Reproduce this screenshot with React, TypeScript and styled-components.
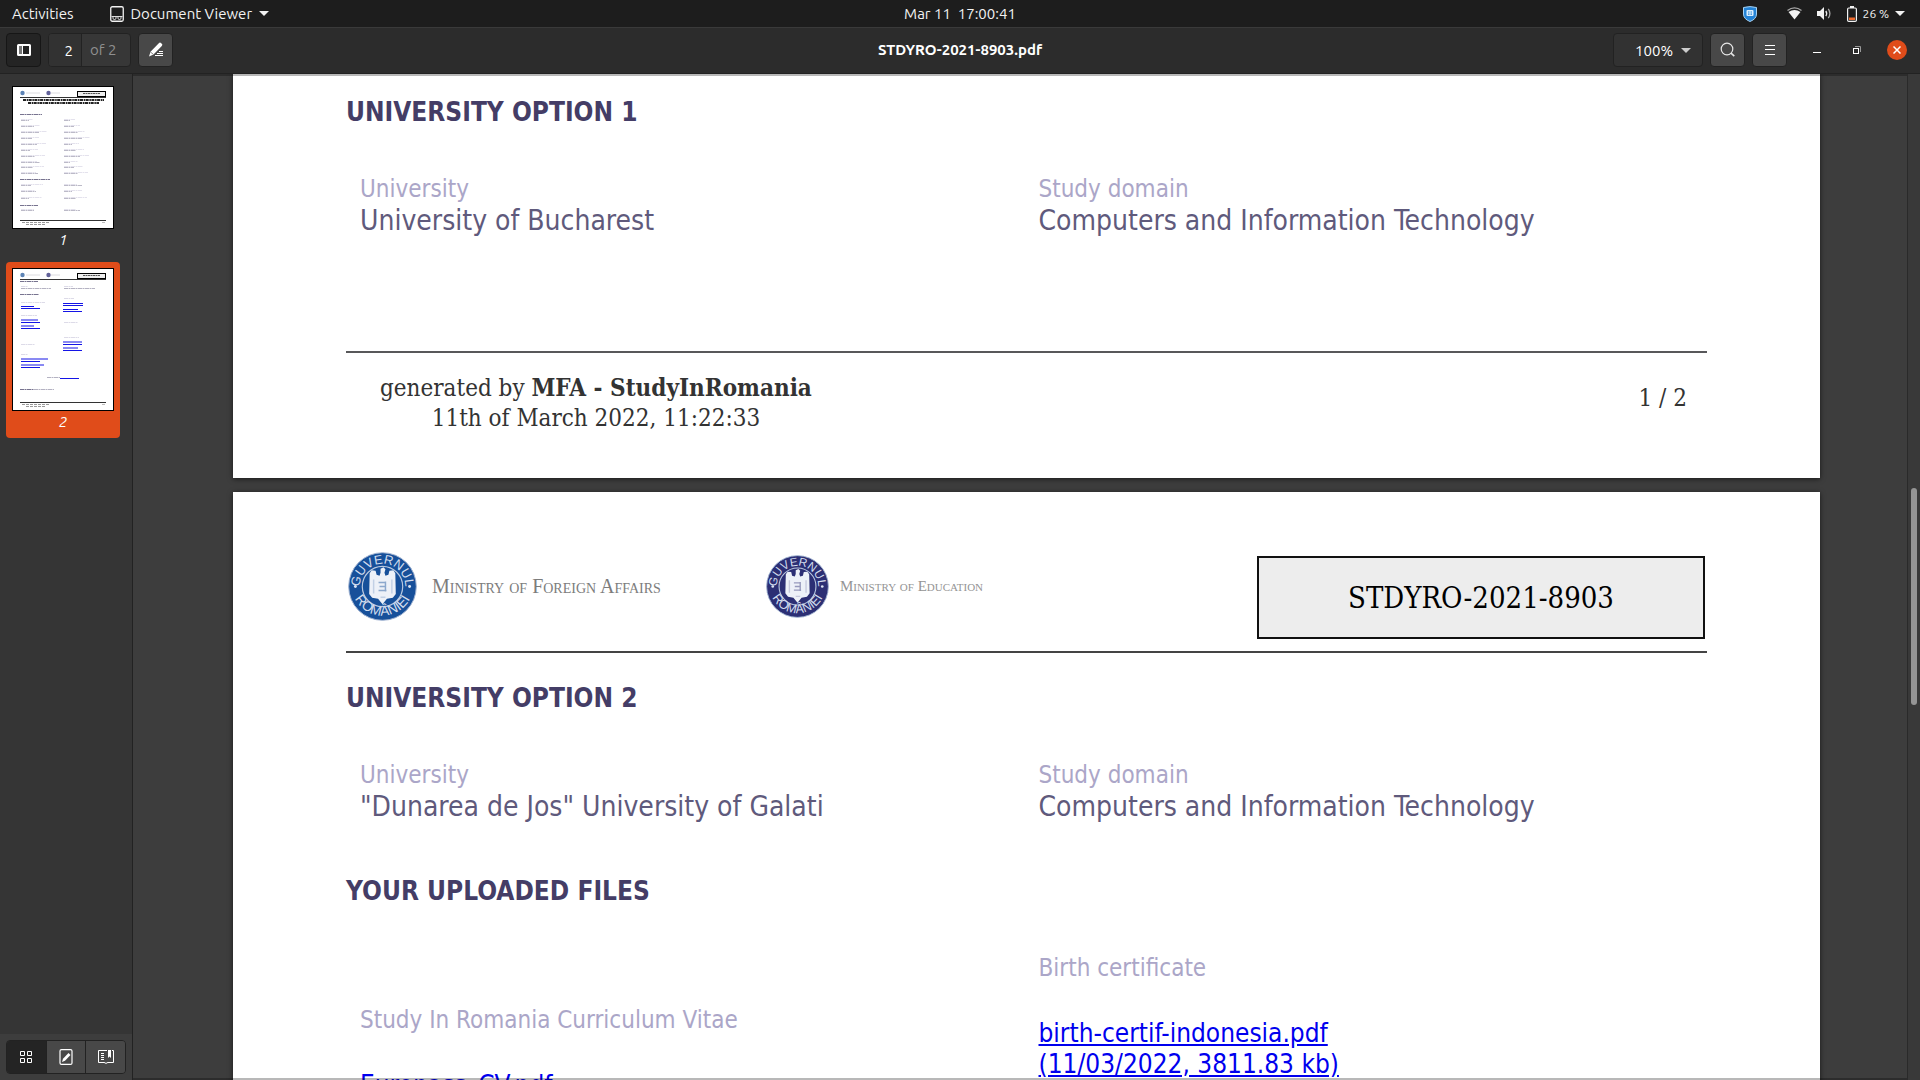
import React from "react";
import styled, { createGlobalStyle, css } from "styled-components";

const uiFont = `Ubuntu, "Noto Sans", "Open Sans", sans-serif`;
const docFont = `"DejaVu Sans Condensed", "DejaVu Sans", sans-serif`;
const serifFont = `"DejaVu Serif Condensed", "DejaVu Serif", serif`;

const GlobalStyle = createGlobalStyle`
  *, *::before, *::after { box-sizing: border-box; }
  body { margin: 0; background: #3d3d3d; }
  h1, h2, p, dl, dt, dd { margin: 0; }
  button, input, select { font: inherit; color: inherit; margin: 0; }
  svg { display: block; }
`;

const Shell = styled.div`
  display: flex;
  flex-direction: column;
  height: 100vh;
  overflow: hidden;
  font-family: ${uiFont};
  font-size: 15px;
  color: #fff;
`;

const bareButton = css`
  border: 0;
  padding: 0;
  background: none;
  display: flex;
  align-items: center;
`;

const TopBar = styled.header`
  display: grid;
  grid-template-columns: 1fr auto 1fr;
  align-items: center;
  height: 27px;
  flex: none;
  padding: 0 12px;
  background: #1d1d1d;
  color: #f2f2f2;
`;

const TopGroup = styled.div<{ $end?: boolean }>`
  display: flex;
  align-items: center;
  justify-content: ${(p) => (p.$end ? "flex-end" : "flex-start")};
  gap: ${(p) => (p.$end ? "15px" : "36px")};
  padding-right: ${(p) => (p.$end ? "3px" : "0")};
`;

const TopButton = styled.button<{ $small?: boolean }>`
  ${bareButton}
  gap: ${(p) => (p.$small ? "6px" : "7px")};
  font-size: ${(p) => (p.$small ? "12px" : "15px")};
  line-height: 20px;
`;

const Clock = styled.time`
  white-space: pre;
  line-height: 20px;
`;

const HeaderBar = styled.div`
  display: grid;
  grid-template-columns: 1fr auto 1fr;
  align-items: center;
  height: 47px;
  flex: none;
  padding: 0 6px;
  background: #2c2c2c;
  box-shadow: inset 0 1px 0 #3a3a3a;
  border-bottom: 1px solid #222;
`;

const Tools = styled.div<{ $end?: boolean }>`
  display: flex;
  align-items: center;
  justify-content: ${(p) => (p.$end ? "flex-end" : "flex-start")};
  gap: 7px;
  padding-right: ${(p) => (p.$end ? "7px" : "0")};
`;

const DocTitle = styled.h1`
  font-size: 15px;
  font-weight: 700;
  line-height: 20px;
`;

const ToolButton = styled.button<{ $pressed?: boolean }>`
  display: flex;
  align-items: center;
  justify-content: center;
  width: 35px;
  height: 34px;
  padding: 0;
  border-radius: 4px;
  border: 1px solid ${(p) => (p.$pressed ? "#161616" : "#222")};
  background: ${(p) => (p.$pressed ? "#242424" : "#484848")};
`;

const PageField = styled.label`
  display: flex;
  align-items: center;
  height: 34px;
  border: 1px solid #222;
  border-radius: 4px;
  background: #373737;
  overflow: hidden;
  color: #8f8f8f;
  line-height: 20px;
`;

const PageInput = styled.input`
  width: 33px;
  height: 32px;
  padding: 0 8px 0 0;
  border: 0;
  border-right: 1px solid #222;
  background: #323232;
  color: #fff;
  text-align: right;
`;

const PageTotal = styled.span`
  width: 48px;
  padding-left: 8px;
`;

const ZoomField = styled.div`
  display: flex;
  align-items: center;
  width: 90px;
  height: 34px;
  padding: 0 11px 0 21px;
  border: 1px solid #222;
  border-radius: 4px;
  background: #323232;
`;

const ZoomSelect = styled.select`
  appearance: none;
  flex: 1;
  min-width: 0;
  padding: 0;
  border: 0;
  background: none;
  color: #fff;
`;

const WindowButtons = styled.div`
  display: flex;
  align-items: center;
  gap: 20px;
  padding-left: 13px;
`;

const WindowButton = styled.button<{ $close?: boolean }>`
  ${bareButton}
  justify-content: center;
  width: 20px;
  height: 20px;
  border-radius: 50%;
  background: ${(p) => (p.$close ? "#e04c1a" : "transparent")};
`;

const Workspace = styled.div`
  display: flex;
  flex: 1;
  min-height: 0;
`;

const Sidebar = styled.aside`
  display: flex;
  flex-direction: column;
  width: 133px;
  flex: none;
  background: #353535;
  border-right: 1px solid #222;
`;

const Thumbs = styled.nav`
  display: flex;
  flex-direction: column;
  gap: 6px;
  flex: 1;
  padding: 6px;
`;

const ThumbButton = styled.button<{ $active?: boolean }>`
  display: flex;
  flex-direction: column;
  align-items: center;
  width: 114px;
  height: 176px;
  padding: 6px 0 0;
  border: 0;
  border-radius: 4px;
  font-style: italic;
  line-height: 22px;
  background: ${(p) => (p.$active ? "#e04c1a" : "transparent")};
`;

const SideFooter = styled.div`
  display: flex;
  height: 46px;
  padding: 6px;
  background: #3d3d3d;
`;

const ModeGroup = styled.div`
  display: flex;
  flex: 1;
  height: 34px;
  border: 1px solid #222;
  border-radius: 4px;
  overflow: hidden;
`;

const ModeButton = styled.button<{ $pressed?: boolean }>`
  ${bareButton}
  flex: 1;
  justify-content: center;
  background: ${(p) => (p.$pressed ? "#242424" : "#484848")};
  & + & { border-left: 1px solid #222; }
`;

const Viewport = styled.main`
  position: relative;
  display: flex;
  flex-direction: column;
  gap: 14px;
  flex: 1;
  min-width: 0;
  padding: 0 100px;
  overflow: hidden;
  background: #3d3d3d;
`;

const EdgeShade = styled.div<{ $bottom?: boolean }>`
  position: absolute;
  left: 0;
  right: 0;
  ${(p) => (p.$bottom ? "bottom: 0;" : "top: 0;")}
  height: 2px;
  background: rgba(0, 0, 0, 0.28);
`;

const ScrollTrack = styled.div`
  position: absolute;
  top: 0;
  bottom: 0;
  right: 0;
  width: 13px;
  padding: 414px 3px 0;
  background: #393939;
  border-left: 1px solid #2a2a2a;
`;

const ScrollThumb = styled.div`
  width: 6px;
  height: 217px;
  border-radius: 3px;
  background: #959595;
`;

const Sheet = styled.article<{ $grow?: boolean }>`
  flex: ${(p) => (p.$grow ? "1 0 auto" : "none")};
  padding: ${(p) => (p.$grow ? "60px 113px 0" : "22px 113px 45px")};
  background: #fff;
  box-shadow: 0 1px 5px rgba(0, 0, 0, 0.6);
  font-family: ${docFont};
`;

const SectionTitle = styled.h2`
  font-size: 26px;
  font-weight: 700;
  line-height: 32px;
  color: #443d66;
`;

const Fields = styled.dl<{ $space: number }>`
  display: grid;
  grid-template-columns: 1fr 1fr;
  gap: 10px;
  padding: 45px 0 ${(p) => p.$space}px 14px;
`;

const FieldCell = styled.div<{ $lowered?: boolean }>`
  padding-top: ${(p) => (p.$lowered ? "52px" : "0")};
`;

const FieldLabel = styled.dt`
  font-size: 24px;
  line-height: 32px;
  color: #aba6c8;
`;

const FieldValue = styled.dd<{ $file?: boolean }>`
  padding-top: ${(p) => (p.$file ? "34px" : "0")};
  font-size: ${(p) => (p.$file ? "26px" : "28px")};
  line-height: 31px;
  color: #5f5a7c;
`;

const FileLink = styled.a`
  color: #0000ee;
  text-decoration: underline;
`;

const SheetFooter = styled.footer`
  display: flex;
  align-items: center;
  justify-content: space-between;
  padding: 20px 20px 0 34px;
  border-top: 2px solid #58585a;
  font-family: ${serifFont};
  font-size: 24px;
  line-height: 30px;
  text-align: center;
  color: #333;
`;

const PageNumber = styled.p`
  padding-bottom: 10px;
`;

const SheetHeader = styled.header`
  display: flex;
  align-items: flex-start;
  height: 101px;
  margin-bottom: 29px;
  padding-right: 2px;
  border-bottom: 2px solid #444;
`;

const Brand = styled.div<{ $wide?: boolean }>`
  display: flex;
  align-items: center;
  gap: ${(p) => (p.$wide ? "15px" : "11px")};
  width: ${(p) => (p.$wide ? "420px" : "360px")};
  height: 68px;
  padding-left: ${(p) => (p.$wide ? "2px" : "0")};
  font-family: "Liberation Serif", serif;
  font-variant: small-caps;
  font-size: ${(p) => (p.$wide ? "20px" : "15px")};
  line-height: 20px;
  color: ${(p) => (p.$wide ? "#7c7c7c" : "#949494")};
`;

const CodeBox = styled.p`
  display: flex;
  align-items: center;
  justify-content: center;
  width: 448px;
  height: 83px;
  margin: 4px 0 0 auto;
  border: 2px solid #111;
  background: #ededed;
  font-family: ${serifFont};
  font-size: 29px;
  line-height: 36px;
  color: #000;
`;

const Caret = ({ color = "#f2f2f2" }: { color?: string }) => (
  <svg width="10" height="5" viewBox="0 0 10 5" aria-hidden="true">
    <path d="M0 0h10L5 5z" fill={color} />
  </svg>
);

const ViewerIcon = () => (
  <svg width="14" height="16" viewBox="0 0 14 16" fill="none" stroke="#f2f2f2" aria-hidden="true">
    <rect x="0.75" y="0.75" width="12.5" height="14.5" rx="1.5" strokeWidth="1.3" />
    <path d="M1.5 10.500h11M3 11v1.200q0 1.300 1.500 1.300T6 12.200V11M8 11v1.200q0 1.300 1.500 1.300T11 12.200V11" strokeWidth="0.900" />
  </svg>
);

const ShieldIcon = () => (
  <svg width="14" height="16" viewBox="0 0 14 16" aria-hidden="true">
    <path d="M0.500 1.500Q7-0.300 13.500 1.500V8q0 5-6.500 7.500Q0.500 13 0.500 8z" fill="#2483d6" stroke="#a6d2f3" />
    <rect x="3.500" y="4" width="7" height="6" rx="1" fill="#d9efff" />
    <path d="M5 6h1.500M7.500 6H9M5 8.200h1.500M7.500 8.200H9" stroke="#2483d6" strokeWidth="1.200" />
  </svg>
);

const WifiIcon = () => (
  <svg width="15" height="13" viewBox="0 0 15 13" aria-hidden="true">
    <path d="M0.500 3.500Q7.500-1.800 14.500 3.500" fill="none" stroke="#a8a8a8" strokeWidth="1.400" />
    <path d="M1.500 5Q7.500 0.800 13.500 5L7.500 12.500z" fill="#f2f2f2" />
  </svg>
);

const SoundIcon = () => (
  <svg width="15" height="13" viewBox="0 0 15 13" aria-hidden="true">
    <path d="M0 4h3l4-4v13L3 9H0z" fill="#f2f2f2" />
    <path d="M8.800 4q1.800 2.500 0 5" fill="none" stroke="#f2f2f2" strokeWidth="1.300" />
    <path d="M11.300 1.800q3.200 4.700 0 9.400" fill="none" stroke="#a8a8a8" strokeWidth="1.300" />
  </svg>
);

const BatteryIcon = () => (
  <svg width="10" height="16" viewBox="0 0 10 16" aria-hidden="true">
    <path d="M3 0h4v2H3z" fill="#f2f2f2" />
    <rect x="0.600" y="2" width="8.800" height="13.400" rx="1.200" fill="none" stroke="#f2f2f2" strokeWidth="1.200" />
    <path d="M2 11.500h6V14H2z" fill="#ef6a2c" />
  </svg>
);

const PanelIcon = () => (
  <svg width="14" height="12" viewBox="0 0 14 12" aria-hidden="true">
    <path d="M1 1h4v10H1z" fill="#777" />
    <rect x="1" y="1" width="12" height="10" rx="0.500" fill="none" stroke="#fff" strokeWidth="2" />
    <path d="M5.500 2v8" stroke="#fff" />
  </svg>
);

const AnnotateIcon = () => (
  <svg width="16" height="16" viewBox="0 0 16 16" aria-hidden="true">
    <path d="M10.800 1.200q1.200-1.200 2.400 0l0.600 0.600q1.200 1 0 2.200L5.500 12.500 1 14.500l1.500-4.800z" fill="#fff" />
    <path d="M11 9.500h4M9 11.500h6M7 13.500h8" stroke="#fff" />
    <path d="M2.900 10.200l2.200 2.200" stroke="#484848" strokeWidth="0.800" />
  </svg>
);

const SearchIcon = () => (
  <svg width="16" height="16" viewBox="0 0 16 16" fill="none" stroke="#e6e6e6" strokeWidth="1.200" aria-hidden="true">
    <circle cx="7" cy="7" r="5.800" />
    <path d="M11 11.200l3.300 3" strokeWidth="1.600" />
  </svg>
);

const MenuIcon = () => (
  <svg width="10" height="10" viewBox="0 0 10 10" stroke="#fff" aria-hidden="true">
    <path d="M0 0.500h10M0 4.500h10M0 9.500h10" />
  </svg>
);

const GridIcon = () => (
  <svg width="12" height="12" viewBox="0 0 12 12" fill="none" stroke="#fff" aria-hidden="true">
    <path d="M0.500 0.500h4v4h-4zM7.500 0.500h4v4h-4zM0.500 7.500h4v4h-4zM7.500 7.500h4v4h-4z" />
  </svg>
);

const NoteIcon = () => (
  <svg width="14" height="16" viewBox="0 0 14 16" aria-hidden="true">
    <rect x="1" y="0.600" width="12" height="14.800" rx="1.500" fill="none" stroke="#fff" strokeWidth="1.200" />
    <path d="M9.500 4l2 2-5.500 5.800-3 1.200 1-3.200z" fill="#fff" />
  </svg>
);

const BookmarkIcon = () => (
  <svg width="16" height="14" viewBox="0 0 16 14" fill="none" stroke="#fff" aria-hidden="true">
    <path d="M9 0.500H0.500v12H6q1 0 2 1 1-1 2-1h5.500v-12H14" />
    <path d="M3 3.500h3M3 5.500h3M3 7.500h3M3 9.500h3" />
    <path d="M10 0h3v8l-1.500-1.500L10 8z" fill="#fff" stroke="none" />
  </svg>
);

const Emblem = ({ id, size, color }: { id: string; size: number; color: string }) => (
  <svg width={size} height={size} viewBox="0 0 70 70" aria-hidden="true">
    <defs>
      <path id={`${id}-top`} d="M12 35a23 23 0 0 1 46 0" />
      <path id={`${id}-bottom`} d="M3.500 33a31.500 31.500 0 0 0 63 0" />
    </defs>
    <circle cx="35" cy="35" r="34.300" fill={color} stroke="#9fb2d0" strokeWidth="1" />
    <circle cx="35" cy="35" r="20.500" fill="none" stroke="#b9c8e0" strokeWidth="1.200" />
    <g fill="#d3ddee" fontFamily="Liberation Sans, sans-serif" fontSize="13">
      <text textAnchor="middle">
        <textPath href={`#${id}-top`} startOffset="50%">GUVERNUL</textPath>
      </text>
      <text textAnchor="middle" fontSize="14">
        <textPath href={`#${id}-bottom`} startOffset="50%">ROMÂNIEI</textPath>
      </text>
    </g>
    <circle cx="7.500" cy="35" r="1.500" fill="#dbe4f2" />
    <circle cx="62.500" cy="35" r="1.500" fill="#dbe4f2" />
    <path
      d="M33 17l3-1.500 2 2-1 3.500 1 3 3-1 1-4 4-0.500 2 3 0.500 21-3 4-6 1-4.500 5.500-4.500-5.500-6-1-3-4 0.500-21 2-3 4 0.500 1 4 3 1 1-3z"
      fill="#edf1f8"
    />
    <path d="M31 31h7M32 35h6M31 39h8M38 30v10" fill="none" stroke={color} strokeOpacity="0.450" strokeWidth="1.500" />
    <path d="M26 28v14M44.500 28v14M33 46h5" fill="none" stroke={color} strokeOpacity="0.200" strokeWidth="1.500" />
  </svg>
);

type Stroke = [number, number, number];

const ThumbFrame = ({ children }: { children: React.ReactNode }) => (
  <svg width="102" height="143" viewBox="0 0 102 143" fill="none" aria-hidden="true">
    <rect x="0.500" y="0.500" width="101" height="142" fill="#fff" stroke="#000" />
    <circle cx="10.500" cy="7" r="2.200" fill="#5d83b5" />
    <circle cx="36.500" cy="7" r="2.200" fill="#62629a" />
    <path d="M14 7h14M39 7h9" stroke="#dcdce0" />
    <rect x="65.500" y="5.500" width="28" height="5" fill="#eee" stroke="#000" />
    <path d="M71 7.500h17" stroke="#555" strokeDasharray="2 0.500" />
    <path d="M8 11.500h86M8 134.500h86" stroke="#333" />
    {children}
    <path d="M10 136.500h28M14 138.500h20" stroke="#999" strokeDasharray="3 1" />
    <path d="M90 136.500h3" stroke="#bbb" />
  </svg>
);

const Lines = ({ items, color }: { items: Stroke[]; color: string }) => (
  <path d={items.map(([x, y, w]) => `M${x} ${y}.5h${w}`).join("")} stroke={color} strokeDasharray="4 0.500 2 0.500" />
);

const firstRows = [33, 39, 45, 51, 57, 63, 69, 75, 80, 86, 98, 104, 111, 123];

const FirstThumb = () => (
  <ThumbFrame>
    <path d="M11 14h81M16 17h71" stroke="#222" strokeWidth="2" strokeDasharray="3 0.700 1.500 0.500" />
    <Lines color="#77738f" items={[[8, 28, 22], [8, 93, 30], [8, 119, 18]]} />
    <Lines color="#e4e2ed" items={firstRows.flatMap((y, i): Stroke[] => [[9, y, 12 + ((i * 7) % 15)], [52, y, 11 + ((i * 5) % 16)]])} />
    <Lines color="#bcbac8" items={firstRows.flatMap((y, i): Stroke[] => [[9, y + 1, 8 + ((i * 5) % 12)], [52, y + 1, 6 + ((i * 4) % 14)]])} />
  </ThumbFrame>
);

const SecondThumb = () => (
  <ThumbFrame>
    <Lines color="#77738f" items={[[8, 13, 18], [8, 26, 19], [8, 121, 14]]} />
    <Lines color="#dddbe8" items={[[9, 18, 7], [52, 18, 9], [52, 30, 10], [9, 34, 24], [9, 47, 16], [52, 54, 14], [52, 69, 15], [9, 76, 14], [9, 86, 7]]} />
    <Lines color="#b4b2c2" items={[[9, 20, 30], [52, 20, 31], [35, 109, 13], [22, 121, 20]]} />
    <path
      d="M9 38.500h13M9 40.500h19M51 35.500h20M51 37.500h20M51 41.500h15M51 43.500h19M9 52h17M9 54.500h19M9 58h13M9 60.500h19M51 74h19M51 76.500h19M51 80h15M51 82.500h19M9 91h27M9 93.500h19M9 97h23M9 99.500h19M48 110.500h19"
      stroke="#1414e6"
    />
  </ThumbFrame>
);

const OptionFields = ({ university, domain, space }: { university: string; domain: string; space: number }) => (
  <Fields $space={space}>
    <FieldCell>
      <FieldLabel>University</FieldLabel>
      <FieldValue>{university}</FieldValue>
    </FieldCell>
    <FieldCell>
      <FieldLabel>Study domain</FieldLabel>
      <FieldValue>{domain}</FieldValue>
    </FieldCell>
  </Fields>
);

export default function App() {
  return (
    <Shell>
      <GlobalStyle />
      <TopBar>
        <TopGroup>
          <TopButton>Activities</TopButton>
          <TopButton>
            <ViewerIcon />
            Document Viewer
            <Caret />
          </TopButton>
        </TopGroup>
        <Clock>{"Mar 11  17:00:41"}</Clock>
        <TopGroup $end>
          <TopButton aria-label="Protection"><ShieldIcon /></TopButton>
          <span />
          <WifiIcon />
          <SoundIcon />
          <TopButton $small>
            <BatteryIcon />
            26 %
            <Caret />
          </TopButton>
        </TopGroup>
      </TopBar>

      <HeaderBar>
        <Tools>
          <ToolButton $pressed aria-label="Side pane"><PanelIcon /></ToolButton>
          <PageField>
            <PageInput aria-label="Page" defaultValue="2" />
            <PageTotal>of 2</PageTotal>
          </PageField>
          <ToolButton aria-label="Annotate"><AnnotateIcon /></ToolButton>
        </Tools>
        <DocTitle>STDYRO-2021-8903.pdf</DocTitle>
        <Tools $end>
          <ZoomField>
            <ZoomSelect aria-label="Zoom" defaultValue="100%">
              <option>100%</option>
            </ZoomSelect>
            <Caret color="#ccc" />
          </ZoomField>
          <ToolButton aria-label="Find"><SearchIcon /></ToolButton>
          <ToolButton aria-label="Menu"><MenuIcon /></ToolButton>
          <WindowButtons>
            <WindowButton aria-label="Minimize">
              <svg width="8" height="6" viewBox="0 0 8 6" aria-hidden="true"><path d="M0 5.500h8" stroke="#fff" /></svg>
            </WindowButton>
            <WindowButton aria-label="Restore">
              <svg width="8" height="8" viewBox="0 0 8 8" fill="none" aria-hidden="true">
                <path d="M2 0.500h5.500V6" stroke="#999" />
                <rect x="0.500" y="2.500" width="5" height="5" stroke="#fff" />
              </svg>
            </WindowButton>
            <WindowButton $close aria-label="Close">
              <svg width="8" height="8" viewBox="0 0 8 8" stroke="#fff" strokeWidth="1.500" aria-hidden="true"><path d="M0.500 0.500l7 7M7.500 0.500l-7 7" /></svg>
            </WindowButton>
          </WindowButtons>
        </Tools>
      </HeaderBar>

      <Workspace>
        <Sidebar>
          <Thumbs aria-label="Pages">
            <ThumbButton><FirstThumb />1</ThumbButton>
            <ThumbButton $active><SecondThumb />2</ThumbButton>
          </Thumbs>
          <SideFooter>
            <ModeGroup>
              <ModeButton $pressed aria-label="Thumbnails"><GridIcon /></ModeButton>
              <ModeButton aria-label="Annotations"><NoteIcon /></ModeButton>
              <ModeButton aria-label="Bookmarks"><BookmarkIcon /></ModeButton>
            </ModeGroup>
          </SideFooter>
        </Sidebar>

        <Viewport>
          <Sheet>
            <SectionTitle>UNIVERSITY OPTION 1</SectionTitle>
            <OptionFields university="University of Bucharest" domain="Computers and Information Technology" space={115} />
            <SheetFooter>
              <p>
                generated by <b>MFA - StudyInRomania</b>
                <br />
                11th of March 2022, 11:22:33
              </p>
              <PageNumber>1 / 2</PageNumber>
            </SheetFooter>
          </Sheet>

          <Sheet $grow>
            <SheetHeader>
              <Brand $wide>
                <Emblem id="mfa" size={69} color="#17509a" />
                Ministry of Foreign Affairs
              </Brand>
              <Brand>
                <Emblem id="edu" size={63} color="#2c2f74" />
                Ministry of Education
              </Brand>
              <CodeBox>STDYRO-2021-8903</CodeBox>
            </SheetHeader>
            <SectionTitle>UNIVERSITY OPTION 2</SectionTitle>
            <OptionFields university={'"Dunarea de Jos" University of Galati'} domain="Computers and Information Technology" space={53} />
            <SectionTitle>YOUR UPLOADED FILES</SectionTitle>
            <Fields $space={0}>
              <FieldCell $lowered>
                <FieldLabel>Study In Romania Curriculum Vitae</FieldLabel>
                <FieldValue $file>
                  <FileLink href="#cv">Europass_CV.pdf</FileLink>
                </FieldValue>
              </FieldCell>
              <FieldCell>
                <FieldLabel>Birth certificate</FieldLabel>
                <FieldValue $file>
                  <FileLink href="#birth">
                    birth-certif-indonesia.pdf
                    <br />
                    (11/03/2022, 3811.83 kb)
                  </FileLink>
                </FieldValue>
              </FieldCell>
            </Fields>
          </Sheet>
          <EdgeShade />
          <EdgeShade $bottom />
          <ScrollTrack><ScrollThumb /></ScrollTrack>
        </Viewport>
      </Workspace>
    </Shell>
  );
}
